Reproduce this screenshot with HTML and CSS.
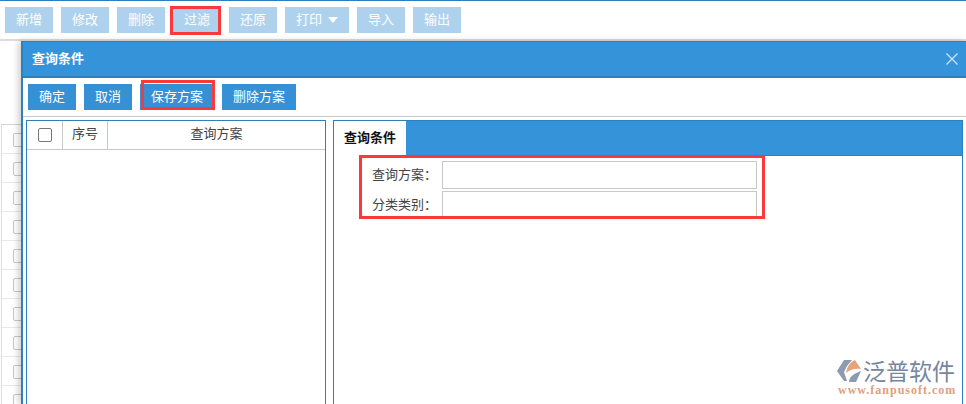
FILE: index.html
```html
<!DOCTYPE html>
<html lang="zh-CN">
<head>
<meta charset="utf-8">
<title>查询条件</title>
<link rel="stylesheet" href="styles.css">
</head>
<body>
<div class="page">
  <div class="topline"></div>
  <div class="toolbar">
    <button class="btn faded">新增</button>
    <button class="btn faded">修改</button>
    <button class="btn faded">删除</button>
    <button class="btn faded marked-filter">过滤</button>
    <button class="btn faded">还原</button>
    <button class="btn faded wide">打印<span class="caret"></span></button>
    <button class="btn faded">导入</button>
    <button class="btn faded">输出</button>
  </div>
  <div class="bg-grid">
    <div class="bg-row"><span class="bg-check"></span></div>
    <div class="bg-row"><span class="bg-check"></span></div>
    <div class="bg-row"><span class="bg-check"></span></div>
    <div class="bg-row"><span class="bg-check"></span></div>
    <div class="bg-row"><span class="bg-check"></span></div>
    <div class="bg-row"><span class="bg-check"></span></div>
    <div class="bg-row"><span class="bg-check"></span></div>
    <div class="bg-row"><span class="bg-check"></span></div>
    <div class="bg-row"><span class="bg-check"></span></div>
    <div class="bg-row"><span class="bg-check"></span></div>
  </div>
</div>

<section class="dialog">
  <header class="dialog-title">
    <span class="dialog-name">查询条件</span>
    <svg class="close" viewBox="0 0 12 12" width="12" height="12"><path d="M.5.5l11 11M11.500.5l-11 11"/></svg>
  </header>
  <div class="dialog-actions">
    <button class="btn solid">确定</button>
    <button class="btn solid">取消</button>
    <button class="btn solid wider marked-save">保存方案</button>
    <button class="btn solid wider">删除方案</button>
  </div>
  <div class="dialog-body">
    <div class="list-panel">
      <div class="list-head">
        <div class="col-check"><span class="checkbox"></span></div>
        <div class="col-no">序号</div>
        <div class="col-name">查询方案</div>
      </div>
    </div>
    <div class="form-panel">
      <div class="tabs"><div class="tab">查询条件</div></div>
      <div class="form marked-form">
        <label class="field"><span class="field-label">查询方案：</span><input class="field-input" type="text"></label>
        <label class="field"><span class="field-label">分类类别：</span><input class="field-input" type="text"></label>
      </div>
    </div>
  </div>
</section>

<div class="logo">
  <div class="logo-top">
    <svg class="logo-mark" viewBox="0 0 26 26" width="26" height="26">
      <path class="mark-grey" d="M8 2h8L11 8 8 14l3 9H8L1 13z"/>
      <path class="mark-orange" d="M10 15c1-6 4-11 9-13l6 9c-5-1-11 0-15 4z"/>
      <path class="mark-grey" d="M13 24c0-4 3-8 12-11l-5 11z"/>
    </svg>
    <span class="logo-name">泛普软件</span>
  </div>
  <div class="logo-url">www.fanpusoft.com</div>
</div>
</body>
</html>
```
FILE: styles.css
```css
* { box-sizing: border-box; }
html, body { margin: 0; height: 100%; }
body {
  width: 966px;
  height: 404px;
  overflow: hidden;
  position: relative;
  background: #fff;
  font-family: "Noto Sans CJK SC", "Liberation Sans", sans-serif;
  font-size: 13px;
  color: #444;
}
.topline { height: 1px; background: #2f7fbd; }
.toolbar {
  display: flex;
  gap: 8px;
  height: 40px;
  padding: 6px 5px 0;
  border-bottom: 2px solid #dcdcdc;
}
.btn {
  position: relative;
  width: 48px;
  height: 26px;
  padding: 0 0 2px;
  border: 0;
  color: #fff;
  font: inherit;
  line-height: 24px;
  text-align: center;
}
.faded { background: #aed2ee; }
.solid { background: #3690d6; }
.wide { width: 64px; }
.wider { width: 74px; }
.caret {
  display: inline-block;
  margin-left: 6px;
  border-style: solid;
  border-width: 6px 5px 0;
  border-color: #fff transparent transparent;
  vertical-align: 1px;
}
.marked-filter::after,
.marked-save::after,
.marked-form::after {
  content: "";
  position: absolute;
  border: 3px solid #f93a3a;
  pointer-events: none;
}
.marked-filter::after { inset: -1px 0 -2px -3px; }
.marked-save::after { inset: -4px -1px 0 1px; }

.bg-grid {
  margin: 83px 0 0 1px;
  width: 30px;
  border-top: 1px solid #c5d6e4;
  border-left: 1px solid #dcdcdc;
}
.bg-row {
  height: 29px;
  padding: 8px 0 0 11px;
  border-bottom: 1px solid #e8e8e8;
}
.bg-check {
  display: block;
  width: 14px;
  height: 14px;
  border: 1px solid #c8c8c8;
  border-radius: 2px;
  background: #fff;
}

.dialog {
  position: absolute;
  left: 21px;
  top: 41px;
  width: 945px;
  height: 363px;
  background: #fff;
  border-left: 2px solid #2d7fbd;
  box-shadow: -3px 0 6px rgba(0, 0, 0, .18);
}
.dialog-title {
  display: flex;
  align-items: center;
  justify-content: space-between;
  height: 37px;
  padding: 0 8px 0 9px;
  background: #3593da;
  border-top: 1px solid #2d7fbd;
  border-bottom: 2px solid #2f7fbd;
  color: #fff;
  font-weight: 700;
}
.dialog-name { line-height: 30px; height: 32px; }
.close { stroke: #cfe3f3; stroke-width: 1.300; fill: none; }
.dialog-actions {
  display: flex;
  gap: 8px;
  height: 39px;
  padding: 6px 0 0 5px;
  border-bottom: 1px solid #c8c8c8;
}
.dialog-body {
  display: flex;
  gap: 7px;
  height: 287px;
  padding: 3px 0 0 3px;
}
.list-panel {
  width: 300px;
  border: 1px solid #2d7fbd;
  border-bottom: 0;
}
.list-head {
  display: flex;
  height: 29px;
  border-bottom: 1px solid #c8c8c8;
  line-height: 24px;
  text-align: center;
}
.col-check {
  display: flex;
  width: 36px;
  align-items: center;
  justify-content: center;
  border-right: 1px solid #c8c8c8;
}
.checkbox {
  width: 14px;
  height: 14px;
  border: 1px solid #777;
  border-radius: 2px;
}
.col-no { width: 45px; border-right: 1px solid #c8c8c8; }
.col-name { flex: 1; }
.form-panel {
  width: 630px;
  border: 1px solid #2d7fbd;
  border-bottom: 0;
}
.tabs {
  height: 35px;
  background: #3593da;
  border-bottom: 1px solid #2d7fbd;
}
.tab {
  width: 72px;
  height: 35px;
  background: #fff;
  color: #111;
  font-weight: 700;
  line-height: 32px;
  text-align: center;
}
.form {
  position: relative;
  width: 406px;
  margin: -1px 0 0 25px;
  padding: 6px 8px 0 13px;
  height: 64px;
}
.marked-form::after { inset: 0; }
.field {
  display: flex;
  height: 28px;
  margin-bottom: 2px;
}
.field-label { width: 70px; line-height: 26px; }
.field-input {
  width: 315px;
  height: 28px;
  border: 1px solid #c8c8c8;
  background: #fff;
  outline: 0;
  padding: 0;
}

.logo {
  position: absolute;
  left: 836px;
  top: 357px;
  width: 124px;
}
.logo-top { display: flex; align-items: center; height: 28px; }
.logo-mark { flex: none; }
.mark-grey { fill: #8c9bb0; }
.mark-orange { fill: #e8a27a; }
.logo-name {
  margin-left: 1px;
  color: #76879e;
  font-size: 23px;
  line-height: 26px;
  height: 28px;
  white-space: nowrap;
}
.logo-url {
  color: #dfa080;
  font-family: "Liberation Serif", serif;
  font-size: 12px;
  font-weight: 700;
  line-height: 11px;
  letter-spacing: 1px;
  white-space: nowrap;
  padding-left: 2px;
}
```
